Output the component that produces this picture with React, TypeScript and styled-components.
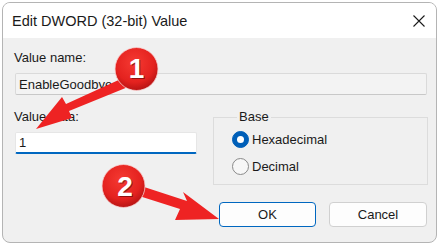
import React from 'react';
import styled, { createGlobalStyle } from 'styled-components';

const GlobalStyle = createGlobalStyle`
	html, body {
		margin: 0;
		padding: 0;
		background: #ffffff;
	}
	body {
		font-family: 'Liberation Sans', Arial, sans-serif;
		color: #1a1a1a;
	}
`;

function App() {
	return (
		<Page>
			<GlobalStyle />
			<Window>
				<TitleBar>
					<Title>Edit DWORD (32-bit) Value</Title>
					<CloseButton aria-label='close'>
						<svg width='12' height='12' viewBox='0 0 12 12'>
							<path d='M0.5 0.5 L11.5 11.5 M11.5 0.5 L0.5 11.5' stroke='#1b1b1b' strokeWidth='1.1' />
						</svg>
					</CloseButton>
				</TitleBar>
				<Body>
					<Label>Value name:</Label>
					<TextBox $readOnly value='EnableGoodbye' readOnly />
					<Row>
						<DataColumn>
							<Label>Value data:</Label>
							<TextBox $focused defaultValue='1' />
						</DataColumn>
						<Group>
							<Legend>Base</Legend>
							<RadioRow>
								<RadioDot $checked />
								Hexadecimal
							</RadioRow>
							<RadioRow>
								<RadioDot />
								Decimal
							</RadioRow>
						</Group>
					</Row>
					<ButtonRow>
						<DialogButton $primary>OK</DialogButton>
						<DialogButton>Cancel</DialogButton>
					</ButtonRow>
				</Body>
			</Window>
			<Annotations width='443' height='245' viewBox='0 0 443 245'>
				<defs>
					<radialGradient id='badge' cx='45%' cy='35%' r='65%'>
						<stop offset='0%' stopColor='#f53a32' />
						<stop offset='70%' stopColor='#e4221f' />
						<stop offset='100%' stopColor='#b81414' />
					</radialGradient>
				</defs>
				{/* arrow 1: badge to the value data field */}
				<polygon
					points='123,78 66,104 62,97 36,129 72,118 69,111 128,87'
					fill='#ee2323'
				/>
				{/* arrow 2: badge to OK */}
				<polygon
					points='138,185 187,201 183,192 219,219 175,220 180,209 136,195'
					fill='#ee2323'
				/>
				<circle cx='136.5' cy='69' r='21.5' fill='url(#badge)' stroke='#f7d0d0' strokeWidth='0.8' />
				<circle cx='123.5' cy='186' r='21.5' fill='url(#badge)' stroke='#f7d0d0' strokeWidth='0.8' />
				<BadgeText x='137.5' y='79' $shadow>1</BadgeText>
				<BadgeText x='136.5' y='78'>1</BadgeText>
				<BadgeText x='126' y='197' $shadow>2</BadgeText>
				<BadgeText x='125' y='196'>2</BadgeText>
			</Annotations>
		</Page>
	);
}

const Page = styled.div`
	position: relative;
	width: 443px;
	height: 245px;
	overflow: hidden;
`;

const Window = styled.div`
	margin: 2px 0 0 2px;
	width: 435px;
	height: 241px;
	box-sizing: border-box;
	border: 1px solid #b4b4b4;
	border-radius: 8px;
	overflow: hidden;
	background: #f0f0f0;
	display: flex;
	flex-direction: column;
`;

const TitleBar = styled.div`
	height: 35px;
	flex: none;
	background: #ffffff;
	display: flex;
	align-items: center;
	justify-content: space-between;
	padding: 0 10px 0 9px;
`;

const Title = styled.span`
	font-size: 14.5px;
	color: #1a1a1a;
	margin-top: 1px;
`;

const CloseButton = styled.span`
	display: flex;
	width: 12px;
	height: 12px;
	margin-right: 1px;
`;

const Body = styled.div`
	flex: 1;
	display: flex;
	flex-direction: column;
	padding: 12px 8px 0 12px;
`;

const Label = styled.div`
	font-size: 13px;
	line-height: 16px;
	margin-left: -1px;
	color: #1a1a1a;
`;

const TextBox = styled.input<{ $readOnly?: boolean; $focused?: boolean }>`
	box-sizing: border-box;
	height: 22px;
	margin-top: 7px;
	width: ${(p) => (p.$focused ? '182px' : '412px')};
	padding: 0 3px;
	font-family: 'Liberation Sans', Arial, sans-serif;
	font-size: 13px;
	color: #1a1a1a;
	outline: none;
	background: ${(p) => (p.$readOnly ? '#f3f3f3' : '#ffffff')};
	border: 1px solid ${(p) => (p.$readOnly ? '#dadada' : '#e6e6e6')};
	border-bottom: ${(p) => (p.$focused ? '2px solid #0067c0' : '1px solid #c8c8c8')};
	border-radius: 2px;
`;

const Row = styled.div`
	display: flex;
	gap: 16px;
	margin-top: 14px;
`;

const DataColumn = styled.div`
	display: flex;
	flex-direction: column;
	width: 182px;
`;

const Group = styled.fieldset`
	box-sizing: border-box;
	width: 215px;
	height: 76px;
	margin: 0;
	padding: 6px 0 0 18px;
	border: 1px solid #dcdcdc;
	display: flex;
	flex-direction: column;
	gap: 10px;
`;

const Legend = styled.legend`
	font-size: 13px;
	line-height: 16px;
	padding: 0 2px;
	margin-left: 5px;
	color: #1a1a1a;
`;

const RadioRow = styled.label`
	display: flex;
	align-items: center;
	gap: 3px;
	font-size: 13px;
	line-height: 16px;
	color: #1a1a1a;
`;

const RadioDot = styled.span<{ $checked?: boolean }>`
	box-sizing: border-box;
	width: 17px;
	height: 17px;
	border-radius: 50%;
	flex: none;
	background: ${(p) => (p.$checked ? '#005fb8' : '#f7f7f7')};
	border: 1px solid ${(p) => (p.$checked ? '#005fb8' : '#8a8a8a')};
	display: flex;
	align-items: center;
	justify-content: center;
	&::after {
		content: '';
		display: ${(p) => (p.$checked ? 'block' : 'none')};
		width: 7px;
		height: 7px;
		border-radius: 50%;
		background: #ffffff;
	}
`;

const ButtonRow = styled.div`
	display: flex;
	justify-content: flex-end;
	gap: 13px;
	margin-top: 17px;
	margin-right: 1px;
`;

const DialogButton = styled.button<{ $primary?: boolean }>`
	box-sizing: border-box;
	width: ${(p) => (p.$primary ? '97px' : '98px')};
	height: 25px;
	font-family: 'Liberation Sans', Arial, sans-serif;
	font-size: 13px;
	color: #1a1a1a;
	background: #fdfdfd;
	border: 1px solid ${(p) => (p.$primary ? '#0067c0' : '#d0d0d0')};
	border-radius: 4px;
	padding: 0;
`;

const Annotations = styled.svg`
	position: absolute;
	left: 0;
	top: 0;
	pointer-events: none;
`;

const BadgeText = styled.text<{ $shadow?: boolean }>`
	font-family: 'Liberation Sans', Arial, sans-serif;
	font-weight: 700;
	font-size: 28px;
	text-anchor: middle;
	fill: ${(p) => (p.$shadow ? 'rgba(70, 0, 0, 0.55)' : '#ffffff')};
`;

export default App;
